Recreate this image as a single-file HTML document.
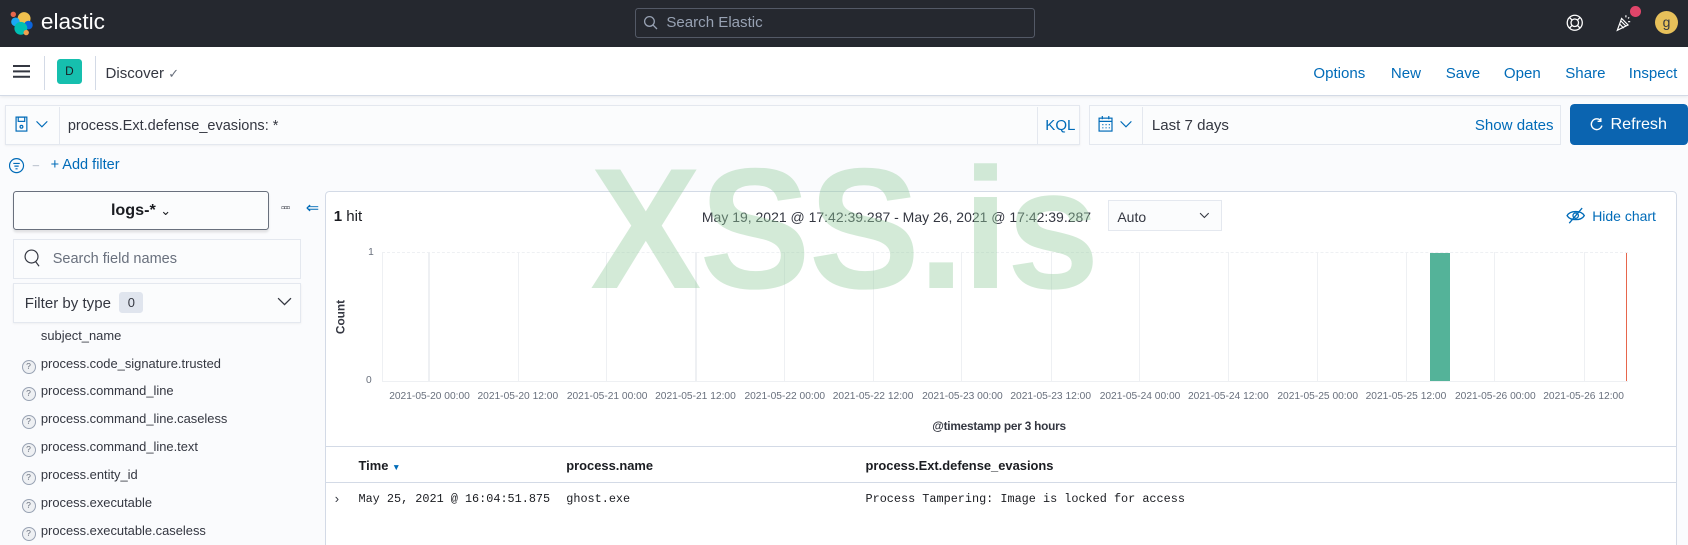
<!DOCTYPE html>
<html><head><meta charset="utf-8"><style>
*{box-sizing:border-box;margin:0;padding:0}
html,body{width:1688px;height:545px;overflow:hidden;background:#fafbfd}
#w{zoom:1.07653;width:1568px;height:507px;position:relative;font-family:"Liberation Sans",sans-serif;color:#343741;font-size:13px}
.a{position:absolute;white-space:nowrap}
.lk{color:#006bb8;font-size:14px}
.fld{position:absolute;left:20px;font-size:12px;color:#343741}
.fld i{display:inline-block;width:13px;height:13px;border:1px solid #98a2b3;border-radius:50%;background:#eef0f3;vertical-align:-1px;margin-right:5px;font-style:normal;font-size:8px;text-align:center;line-height:11px;color:#69707d}
.xl{position:absolute;top:363px;font-size:9.5px;color:#69707d;transform:translateX(-50%);white-space:nowrap}
.gl{position:absolute;top:234px;width:1px;height:120px;background:#eef0f3}
</style></head><body><div id="w">
<div class="a" style="left:0;top:0;width:1568px;height:44px;background:#25282f"></div>
<svg class="a" style="left:8px;top:9px" width="24" height="26" viewBox="0 0 24 26"><circle cx="14" cy="8" r="6" fill="#f0c04e"/><circle cx="6" cy="11" r="4" fill="#1ba9f5"/><circle cx="18" cy="14" r="4" fill="#0b64dd"/><circle cx="11" cy="17" r="6" fill="#00bfb3"/><circle cx="4" cy="4" r="2.5" fill="#e7664c"/><circle cx="16" cy="21" r="2.5" fill="#f0a04e"/></svg>
<div class="a" style="left:38px;top:8px;font-size:21px;color:#fff">elastic</div>
<div class="a" style="left:590px;top:7px;width:371px;height:28px;border:1px solid #535966;border-radius:3px;background:#25282f"></div>
<svg class="a" style="left:597px;top:14px" width="14" height="14" viewBox="0 0 14 14"><circle cx="6" cy="6" r="4.5" fill="none" stroke="#98a2b3" stroke-width="1.2"/><path d="M9 9l4 4" stroke="#98a2b3" stroke-width="1.2"/></svg>
<div class="a" style="left:619px;top:13px;font-size:14px;color:#98a2b3">Search Elastic</div>
<svg class="a" style="left:1453px;top:11px" width="20" height="20" viewBox="0 0 20 20" fill="none" stroke="#fff" stroke-width="1.2"><circle cx="10" cy="10" r="7"/><circle cx="10" cy="10" r="3.5"/><path d="M5 5l2.5 2.5M15 5l-2.5 2.5M5 15l2.5-2.5M15 15l-2.5-2.5"/></svg>
<svg class="a" style="left:1498px;top:11px" width="20" height="20" viewBox="0 0 20 20" fill="none" stroke="#fff" stroke-width="1.1"><path d="M4 17l4-11 6 6z M6 11l4 4 M7 8l5 5"/><path d="M12 3v2M15 5l-1 1M16 9h-2"/></svg>
<div class="a" style="left:1514px;top:6px;width:10px;height:10px;border-radius:50%;background:#e0456a"></div>
<div class="a" style="left:1537px;top:10px;width:22px;height:22px;border-radius:50%;background:#e7c05a;color:#343741;font-size:13px;text-align:center;line-height:21px">g</div>

<div class="a" style="left:0;top:44px;width:1568px;height:45px;background:#fff;border-bottom:1px solid #d3dae6;box-shadow:0 1px 3px rgba(0,0,0,.08)"></div>
<div class="a" style="left:12px;top:60px;width:16px;height:2px;background:#343741;box-shadow:0 5px 0 #343741,0 10px 0 #343741"></div>
<div class="a" style="left:41px;top:52px;width:1px;height:32px;background:#d3dae6"></div>
<div class="a" style="left:53px;top:55px;width:23px;height:23px;border-radius:3px;background:#16bfae;font-size:11px;text-align:center;line-height:23px;color:#1a1c21">D</div>
<div class="a" style="left:88px;top:52px;width:1px;height:32px;background:#d3dae6"></div>
<div class="a" style="left:98px;top:60px;font-size:14px">Discover <span style="color:#69707d;font-size:12px">&#10003;</span></div>
<div class="a lk" style="left:1220px;top:60px">Options</div>
<div class="a lk" style="left:1292px;top:60px">New</div>
<div class="a lk" style="left:1343px;top:60px">Save</div>
<div class="a lk" style="left:1397px;top:60px">Open</div>
<div class="a lk" style="left:1454px;top:60px">Share</div>
<div class="a lk" style="left:1513px;top:60px">Inspect</div>

<div class="a" style="left:5px;top:98px;width:998px;height:37px;background:#fbfcfd;border:1px solid #e4e8ef;box-shadow:0 1px 2px rgba(0,0,0,.06)"></div>
<div class="a" style="left:55px;top:99px;width:1px;height:35px;background:#e4e8ef"></div>
<div class="a" style="left:963px;top:99px;width:1px;height:35px;background:#e4e8ef"></div>
<svg class="a" style="left:14px;top:108px" width="34" height="16" viewBox="0 0 34 16" fill="none" stroke="#006bb8" stroke-width="1.1"><rect x="1" y="1" width="10" height="13"/><rect x="3" y="1" width="6" height="4"/><circle cx="6" cy="10" r="1.3"/><path d="M20 5l5 5 5-5"/></svg>
<div class="a" style="left:63px;top:110px;font-size:13.5px">process.Ext.defense_evasions: *</div>
<div class="a lk" style="left:971px;top:109px">KQL</div>
<div class="a" style="left:1012px;top:98px;width:438px;height:37px;background:#fbfcfd;border:1px solid #e4e8ef"></div>
<div class="a" style="left:1061px;top:99px;width:1px;height:35px;background:#e4e8ef"></div>
<svg class="a" style="left:1020px;top:108px" width="36" height="16" viewBox="0 0 36 16" fill="none" stroke="#006bb8" stroke-width="1.1"><rect x="1" y="2" width="12" height="12"/><path d="M1 5h12M4 0v3M10 0v3M4 8h1M7 8h1M10 8h1M4 11h1M7 11h1M10 11h1"/><path d="M21 5l5 5 5-5"/></svg>
<div class="a" style="left:1070px;top:109px;font-size:14px">Last 7 days</div>
<div class="a lk" style="left:1370px;top:109px">Show dates</div>
<div class="a" style="left:1458px;top:97px;width:110px;height:38px;background:#0b64b0;border-radius:4px;color:#fff;font-size:15px;line-height:38px;padding-left:38px">Refresh</div>
<svg class="a" style="left:1476px;top:109px" width="14" height="14" viewBox="0 0 14 14" fill="none" stroke="#fff" stroke-width="1.3"><path d="M11 3.5A5 5 0 1 0 12 8M11 1v3H8"/></svg>

<svg class="a" style="left:8px;top:146px" width="30" height="16" viewBox="0 0 30 16" fill="none" stroke="#006bb8" stroke-width="1.1"><circle cx="7" cy="8" r="6.5"/><path d="M4 6h6M5 8.5h4M6 11h2"/><path d="M22 8h6" stroke="#c2c9d4"/></svg>
<div class="a lk" style="left:47px;top:146px;font-size:13.5px">+ Add filter</div>

<div class="a" style="left:12px;top:177px;width:238px;height:37px;border:1px solid #69707d;border-radius:3px;background:#fbfcfd;box-shadow:0 2px 2px rgba(0,0,0,.1);text-align:center;line-height:35px;font-size:15px;font-weight:bold;color:#1a1c21">logs-* <span style="font-weight:normal;font-size:12px">&#8964;</span></div>
<div class="a" style="left:261px;top:188px;font-size:10px;letter-spacing:-1px;color:#343741">&#9643;&#9643;&#9643;</div>
<div class="a" style="left:284px;top:184px;color:#006bb8;font-size:15px">&#8656;</div>
<div class="a" style="left:12px;top:222px;width:268px;height:37px;border:1px solid #e4e8ef;background:#fbfcfd"></div>
<svg class="a" style="left:22px;top:231px" width="16" height="18" viewBox="0 0 16 18" fill="none" stroke="#343741" stroke-width="1.1"><circle cx="7" cy="7" r="6"/><path d="M11 12l3 4"/></svg>
<div class="a" style="left:49px;top:233px;font-size:13.5px;color:#69707d">Search field names</div>
<div class="a" style="left:12px;top:263px;width:268px;height:37px;border:1px solid #e4e8ef;background:#fbfcfd;box-shadow:0 1px 2px rgba(0,0,0,.06)"></div>
<div class="a" style="left:23px;top:274px;font-size:14px">Filter by type</div>
<div class="a" style="left:111px;top:271px;width:22px;height:20px;background:#e0e5ee;border-radius:3px;text-align:center;line-height:20px;font-size:12px">0</div>
<svg class="a" style="left:257px;top:275px" width="14" height="10" viewBox="0 0 14 10" fill="none" stroke="#343741" stroke-width="1.2"><path d="M1 2l6 6 6-6"/></svg>
<div class="fld" style="left:38px;top:305px">subject_name</div>
<div class="fld" style="top:331px"><i>?</i>process.code_signature.trusted</div>
<div class="fld" style="top:356px"><i>?</i>process.command_line</div>
<div class="fld" style="top:382px"><i>?</i>process.command_line.caseless</div>
<div class="fld" style="top:408px"><i>?</i>process.command_line.text</div>
<div class="fld" style="top:434px"><i>?</i>process.entity_id</div>
<div class="fld" style="top:460px"><i>?</i>process.executable</div>
<div class="fld" style="top:486px"><i>?</i>process.executable.caseless</div>

<div class="a" style="left:302px;top:177px;width:1256px;height:340px;background:#fff;border:1px solid #d3dae6;border-radius:4px"></div>
<div class="a" style="left:310px;top:193px;font-size:14px;color:#1a1c21"><b>1</b> hit</div>
<div class="a" style="left:652px;top:194px;font-size:13px">May 19, 2021 @ 17:42:39.287 - May 26, 2021 @ 17:42:39.287</div>
<div class="a" style="left:1029px;top:186px;width:106px;height:29px;border:1px solid #e4e8ef;background:#fbfcfd;font-size:13px;padding:7px 0 0 8px">Auto</div>
<svg class="a" style="left:1114px;top:196px" width="10" height="8" viewBox="0 0 10 8" fill="none" stroke="#343741"><path d="M1 2l4 4 4-4"/></svg>
<svg class="a" style="left:1455px;top:192px" width="18" height="16" viewBox="0 0 18 16" fill="none" stroke="#006bb8" stroke-width="1.2"><path d="M1 8c3-5 13-5 16 0-3 5-13 5-16 0z"/><circle cx="9" cy="8" r="2.5"/><path d="M3 15L15 1"/></svg>
<div class="a lk" style="left:1479px;top:193px;font-size:13px">Hide chart</div>

<div class="a" style="left:355px;top:234px;width:1157px;height:0;border-top:1px dashed #eef0f3"></div>
<div class="a" style="left:355px;top:354px;width:1157px;height:1px;background:#eef0f3"></div>
<div class="a" style="left:355px;top:234px;width:1px;height:120px;background:#eef0f3"></div>
<div class="a" style="left:342px;top:229px;font-size:9.5px;color:#69707d">1</div>
<div class="a" style="left:340px;top:348px;font-size:9.5px;color:#69707d">0</div>
<div class="a" style="left:296px;top:288px;transform:rotate(-90deg);font-size:11px;font-weight:bold;color:#343741;width:40px;text-align:center">Count</div>
<div class="gl" style="left:398px"></div><div class="gl" style="left:481px"></div><div class="gl" style="left:563px"></div><div class="gl" style="left:646px"></div><div class="gl" style="left:728px"></div><div class="gl" style="left:811px"></div><div class="gl" style="left:893px"></div><div class="gl" style="left:976px"></div><div class="gl" style="left:1058px"></div><div class="gl" style="left:1141px"></div><div class="gl" style="left:1223px"></div><div class="gl" style="left:1306px"></div><div class="gl" style="left:1388px"></div><div class="gl" style="left:1471px"></div>
<div class="a" style="left:1328px;top:235px;width:19px;height:119px;background:#54b399"></div>
<div class="a" style="left:1510px;top:235px;width:1.5px;height:119px;background:#e7664c"></div>
<div class="xl" style="left:399px">2021-05-20 00:00</div><div class="xl" style="left:481px">2021-05-20 12:00</div><div class="xl" style="left:564px">2021-05-21 00:00</div><div class="xl" style="left:646px">2021-05-21 12:00</div><div class="xl" style="left:729px">2021-05-22 00:00</div><div class="xl" style="left:811px">2021-05-22 12:00</div><div class="xl" style="left:894px">2021-05-23 00:00</div><div class="xl" style="left:976px">2021-05-23 12:00</div><div class="xl" style="left:1059px">2021-05-24 00:00</div><div class="xl" style="left:1141px">2021-05-24 12:00</div><div class="xl" style="left:1224px">2021-05-25 00:00</div><div class="xl" style="left:1306px">2021-05-25 12:00</div><div class="xl" style="left:1389px">2021-05-26 00:00</div><div class="xl" style="left:1471px">2021-05-26 12:00</div>
<div class="a" style="left:866px;top:389px;font-size:11px;font-weight:bold;letter-spacing:-.2px">@timestamp per 3 hours</div>

<div class="a" style="left:303px;top:414px;width:1254px;height:1px;background:#d3dae6"></div>
<div class="a" style="left:333px;top:425px;font-size:12px;font-weight:bold;color:#1a1c21">Time <span style="color:#006bb8;font-size:8px">&#9660;</span></div>
<div class="a" style="left:526px;top:425px;font-size:12px;font-weight:bold;color:#1a1c21">process.name</div>
<div class="a" style="left:804px;top:425px;font-size:12px;font-weight:bold;color:#1a1c21">process.Ext.defense_evasions</div>
<div class="a" style="left:303px;top:448px;width:1254px;height:1px;background:#d3dae6"></div>
<div class="a" style="left:311px;top:456px;font-size:12px">&#8250;</div>
<div class="a" style="left:333px;top:457px;font-family:'Liberation Mono',monospace;font-size:11px;color:#1a1c21">May 25, 2021 @ 16:04:51.875</div>
<div class="a" style="left:526px;top:457px;font-family:'Liberation Mono',monospace;font-size:11px;color:#1a1c21">ghost.exe</div>
<div class="a" style="left:804px;top:457px;font-family:'Liberation Mono',monospace;font-size:11px;color:#1a1c21">Process Tampering: Image is locked for access</div>

<div class="a" style="left:548px;top:133px;font-size:160px;font-weight:bold;color:rgba(150,205,160,.42);letter-spacing:-2px;line-height:1;transform:scaleX(.97);transform-origin:0 0">XSS.is</div>
</div></body></html>
